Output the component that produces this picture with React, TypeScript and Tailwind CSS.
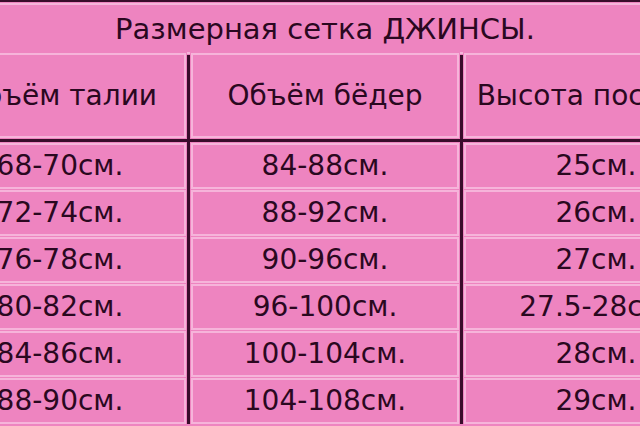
const rows = [
  ["68-70см.", "84-88см.", "25см."],
  ["72-74см.", "88-92см.", "26см."],
  ["76-78см.", "90-96см.", "27см."],
  ["80-82см.", "96-100см.", "27.5-28см."],
  ["84-86см.", "100-104см.", "28см."],
  ["88-90см.", "104-108см.", "29см."],
]

function Cell({ children, className = "" }: { children: React.ReactNode; className?: string }) {
  return (
    <div className="bg-[#ee84c0] p-[1px]">
      <div className={"h-full border-2 border-[#f6b4da] flex items-center justify-center " + className}>
        {children}
      </div>
    </div>
  )
}

export default function App() {
  return (
    <div
      className="w-[640px] h-[426px] overflow-hidden bg-[#ee84c0] text-[#2a0820]"
      style={{ fontFamily: '"DejaVu Sans", sans-serif' }}
    >
      <div className="ml-[-70px] w-[802px] bg-[#3a0c2b] pt-[2px] pb-[3px] px-[3px] flex flex-col gap-[3px]">
        <div className="h-[47px]">
          <Cell className="text-[29px] pr-[12px] pt-[3px]">Размерная сетка ДЖИНСЫ.</Cell>
        </div>
        <div className="h-[87px] grid grid-cols-[254px_270px_266px] gap-[3px]">
          <Cell className="text-[28px] whitespace-nowrap">Объём талии</Cell>
          <Cell className="text-[28px] whitespace-nowrap">Объём бёдер</Cell>
          <Cell className="text-[28px] whitespace-nowrap">Высота посадки</Cell>
        </div>
        {rows.map((r) => (
          <div key={r[0]} className="h-[44px] grid grid-cols-[254px_270px_266px] gap-[3px]">
            {r.map((v, i) => (
              <Cell key={i} className="text-[28px] whitespace-nowrap">{v}</Cell>
            ))}
          </div>
        ))}
      </div>
    </div>
  )
}
